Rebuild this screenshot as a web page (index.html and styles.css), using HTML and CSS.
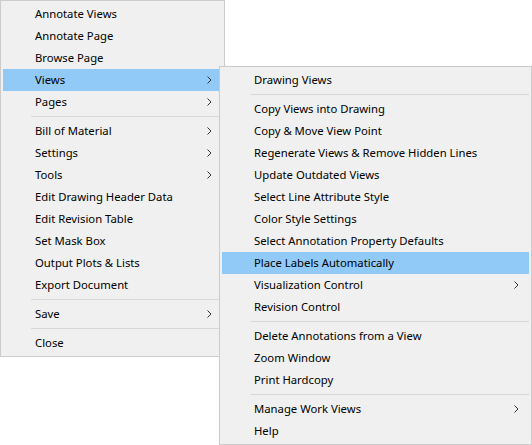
FILE: index.html
```html
<!DOCTYPE html>
<html>
<head>
<meta charset="utf-8">
<link rel="stylesheet" href="styles.css">
</head>
<body>
<div class="desk">
  <div class="menu main">
    <div class="item">Annotate Views</div>
    <div class="item">Annotate Page</div>
    <div class="item">Browse Page</div>
    <div class="item active sub">Views<svg class="arr" width="5" height="8" viewBox="0 0 5 8"><path d="M0.5 0.5 L4 4 L0.5 7.5" fill="none" stroke="#333" stroke-width="1"/></svg></div>
    <div class="item sub">Pages<svg class="arr" width="5" height="8" viewBox="0 0 5 8"><path d="M0.5 0.5 L4 4 L0.5 7.5" fill="none" stroke="#333" stroke-width="1"/></svg></div>
    <div class="sep"></div>
    <div class="item sub">Bill of Material<svg class="arr" width="5" height="8" viewBox="0 0 5 8"><path d="M0.5 0.5 L4 4 L0.5 7.5" fill="none" stroke="#333" stroke-width="1"/></svg></div>
    <div class="item sub">Settings<svg class="arr" width="5" height="8" viewBox="0 0 5 8"><path d="M0.5 0.5 L4 4 L0.5 7.5" fill="none" stroke="#333" stroke-width="1"/></svg></div>
    <div class="item sub">Tools<svg class="arr" width="5" height="8" viewBox="0 0 5 8"><path d="M0.5 0.5 L4 4 L0.5 7.5" fill="none" stroke="#333" stroke-width="1"/></svg></div>
    <div class="item">Edit Drawing Header Data</div>
    <div class="item">Edit Revision Table</div>
    <div class="item">Set Mask Box</div>
    <div class="item">Output Plots &amp; Lists</div>
    <div class="item">Export Document</div>
    <div class="sep"></div>
    <div class="item sub">Save<svg class="arr" width="5" height="8" viewBox="0 0 5 8"><path d="M0.5 0.5 L4 4 L0.5 7.5" fill="none" stroke="#333" stroke-width="1"/></svg></div>
    <div class="sep"></div>
    <div class="item">Close</div>
  </div>
  <div class="menu submenu">
    <div class="item">Drawing Views</div>
    <div class="sep"></div>
    <div class="item">Copy Views into Drawing</div>
    <div class="item">Copy &amp; Move View Point</div>
    <div class="item">Regenerate Views &amp; Remove Hidden Lines</div>
    <div class="item">Update Outdated Views</div>
    <div class="item">Select Line Attribute Style</div>
    <div class="item">Color Style Settings</div>
    <div class="item">Select Annotation Property Defaults</div>
    <div class="item active">Place Labels Automatically</div>
    <div class="item sub">Visualization Control<svg class="arr" width="5" height="8" viewBox="0 0 5 8"><path d="M0.5 0.5 L4 4 L0.5 7.5" fill="none" stroke="#333" stroke-width="1"/></svg></div>
    <div class="item">Revision Control</div>
    <div class="sep"></div>
    <div class="item">Delete Annotations from a View</div>
    <div class="item">Zoom Window</div>
    <div class="item">Print Hardcopy</div>
    <div class="sep"></div>
    <div class="item sub">Manage Work Views<svg class="arr" width="5" height="8" viewBox="0 0 5 8"><path d="M0.5 0.5 L4 4 L0.5 7.5" fill="none" stroke="#333" stroke-width="1"/></svg></div>
    <div class="item">Help</div>
  </div>
</div>
</body>
</html>
```
FILE: styles.css
```css
html, body {
  margin: 0;
  padding: 0;
  background: #ffffff;
}
body {
  font-family: "Noto Sans", "Open Sans", sans-serif;
  font-size: 11.3px;
  color: #000;
}
.desk {
  position: relative;
  width: 532px;
  height: 445px;
  overflow: hidden;
}
.menu {
  background: #f0f0f0;
  border: 1px solid #cccccc;
  padding: 2px;
  box-sizing: border-box;
  display: flex;
  flex-direction: column;
}
.main {
  width: 225px;
  height: 357px;
}
.submenu {
  position: absolute;
  left: 219px;
  top: 66px;
  width: 313px;
  height: 379px;
  box-shadow: 1px 1px 2px rgba(0,0,0,0.08);
}
.item {
  height: 22px;
  display: flex;
  align-items: center;
  padding-left: 32px;
  padding-right: 10px;
  white-space: nowrap;
  line-height: 22px;
}
.item.active {
  background: #91c9f7;
}
.arr {
  margin-left: auto;
  display: block;
}
.sep {
  height: 7px;
  display: flex;
  align-items: center;
  padding-left: 28px;
}
.sep::after {
  content: "";
  display: block;
  height: 1px;
  flex: 1;
  background: #d7d7d7;
}
```
